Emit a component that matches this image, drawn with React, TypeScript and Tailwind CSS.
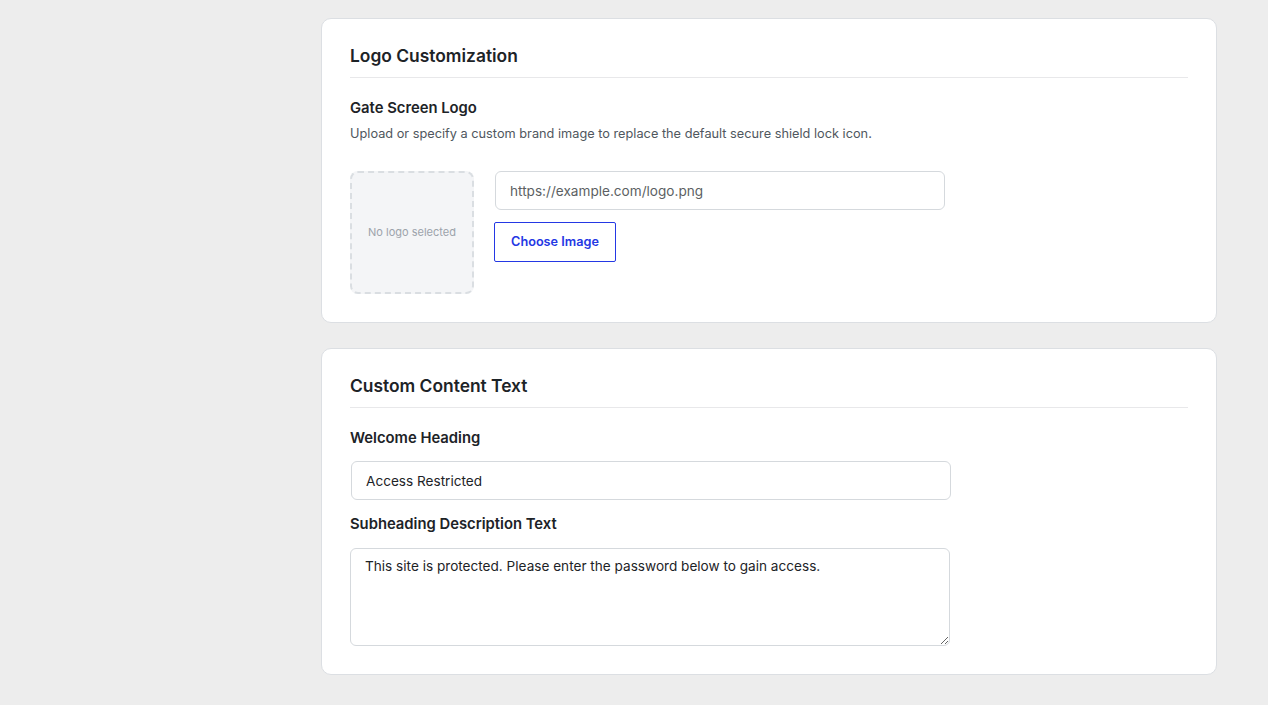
import React from 'react';

const fontStack = { fontFamily: 'Inter, "Noto Sans", sans-serif' };

const Card: React.FC<{ title: string; children: React.ReactNode }> = ({ title, children }) => (
  <section className="w-[896px] rounded-[10px] border border-[#dcdfe3] bg-white px-7 pt-6 pb-7">
    <h2 className="border-b border-[#e8e8ea] pt-px pb-[9px] text-[17.4px] leading-6 font-semibold text-[#1d2327]">
      {title}
    </h2>
    {children}
  </section>
);

export default function App() {
  return (
    <div className="min-h-[705px] bg-[#ededed] pt-[18px] pb-8 pl-[321px]" style={fontStack}>
      <div className="flex flex-col gap-[25px]">
        <Card title="Logo Customization">
          <h3 className="mt-5 text-[14.8px] leading-5 font-semibold text-[#1d2327]">Gate Screen Logo</h3>
          <p className="mt-[6px] text-[12.75px] leading-5 text-[#50575e]">
            Upload or specify a custom brand image to replace the default secure shield lock icon.
          </p>

          <div className="mt-[27px] flex items-start gap-[21px]">
            {/* preview box */}
            <div className="flex h-[123px] w-[124px] items-center justify-center rounded-lg border-2 border-dashed border-[#dadee2] bg-[#f4f5f7]">
              <span className="text-[11px] text-[#9ca3ab]">No logo selected</span>
            </div>

            <div className="flex flex-col items-start">
              <input
                type="text"
                placeholder="https://example.com/logo.png"
                className="h-[39px] w-[450px] rounded-md border border-[#d5d9dd] bg-white px-[14px] text-[13.6px] text-[#1d2327] outline-none placeholder:text-[#5c5f63]"
              />
              <button className="mt-[12px] -ml-px h-[40px] w-[122px] rounded-[2px] border border-[#2438e4] bg-white text-[12.7px] font-semibold text-[#2438e4]">
                Choose Image
              </button>
            </div>
          </div>
        </Card>

        <Card title="Custom Content Text">
          <label className="mt-5 block text-[14.8px] leading-5 font-semibold text-[#1d2327]">Welcome Heading</label>
          <input
            type="text"
            defaultValue="Access Restricted"
            className="mt-[13px] ml-px block h-[39px] w-[600px] rounded-md border border-[#d5d9dd] bg-white px-[14px] text-[13.6px] text-[#1d2327] outline-none"
          />

          <label className="mt-[14px] block text-[14.8px] leading-5 font-semibold text-[#1d2327]">
            Subheading Description Text
          </label>
          <textarea
            defaultValue="This site is protected. Please enter the password below to gain access."
            className="mt-[14px] block h-[98px] w-[600px] rounded-md border border-[#d5d9dd] bg-white px-[14px] py-[7px] text-[13.6px] leading-5 text-[#1d2327] outline-none"
          />
        </Card>
      </div>
    </div>
  );
}
